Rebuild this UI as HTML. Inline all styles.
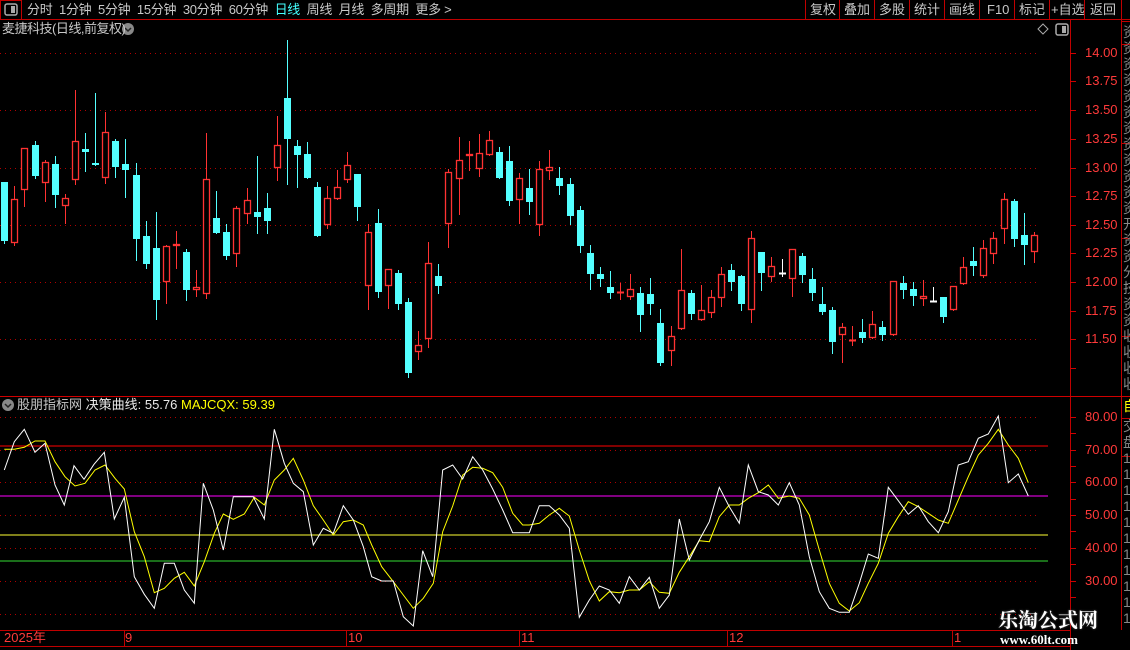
<!DOCTYPE html>
<html><head><meta charset="utf-8">
<style>
html,body{margin:0;padding:0;background:#000;}
body{width:1130px;height:650px;overflow:hidden;position:relative;font-family:"Liberation Sans","Noto Sans CJK SC",sans-serif;}
.t{position:absolute;white-space:nowrap;font-size:13px;color:#c8c8c8;line-height:16px;}
.ax{position:absolute;font-size:13px;color:#ff3a3a;left:1085px;line-height:14px;}
</style></head><body>
<svg id="s" width="1130" height="650" style="position:absolute;left:0;top:0">
<g stroke="#c00000" stroke-width="1" fill="none">
<line x1="0" y1="19.5" x2="1130" y2="19.5"/>
<rect x="0.5" y="0.5" width="21" height="19"/>
<line x1="805.5" y1="0" x2="805.5" y2="19"/><line x1="839.5" y1="0" x2="839.5" y2="19"/>
<line x1="874.5" y1="0" x2="874.5" y2="19"/><line x1="909.5" y1="0" x2="909.5" y2="19"/>
<line x1="944.5" y1="0" x2="944.5" y2="19"/><line x1="979.5" y1="0" x2="979.5" y2="19"/>
<line x1="1014.5" y1="0" x2="1014.5" y2="19"/><line x1="1049.5" y1="0" x2="1049.5" y2="19"/>
<line x1="1084.5" y1="0" x2="1084.5" y2="19"/><line x1="1121.5" y1="0" x2="1121.5" y2="19"/>
<line x1="1070.5" y1="19" x2="1070.5" y2="650"/>
<line x1="1121.5" y1="19" x2="1121.5" y2="630"/>
<line x1="0" y1="396.5" x2="1130" y2="396.5" stroke="#d00000"/>
<line x1="0" y1="630.5" x2="1070" y2="630.5"/>
<line x1="0" y1="646.5" x2="1070" y2="646.5"/>
<line x1="1121" y1="21.5" x2="1130" y2="21.5"/><line x1="1121" y1="44.5" x2="1130" y2="44.5"/>
<line x1="1121" y1="143.5" x2="1130" y2="143.5"/><line x1="1121" y1="238.5" x2="1130" y2="238.5"/>
<line x1="1121" y1="336.5" x2="1130" y2="336.5"/><line x1="1121" y1="418.5" x2="1130" y2="418.5"/>
<line x1="1121" y1="456.5" x2="1130" y2="456.5"/>
<line x1="124.5" y1="630" x2="124.5" y2="646"/><line x1="346.5" y1="630" x2="346.5" y2="646"/>
<line x1="519.5" y1="630" x2="519.5" y2="646"/><line x1="727.5" y1="630" x2="727.5" y2="646"/>
<line x1="952.5" y1="630" x2="952.5" y2="646"/>
</g>
<rect x="5" y="4" width="12" height="11" rx="2" fill="none" stroke="#aaa" stroke-width="1.5"/>
<rect x="11" y="6" width="4" height="7" fill="#aaa"/>
<rect x="1056" y="24" width="12" height="11" rx="2" fill="none" stroke="#aaa" stroke-width="1.5"/>
<rect x="1062" y="26" width="4" height="7" fill="#aaa"/>
<path d="M1043 24 L1048 29 L1043 34 L1038 29 Z" fill="none" stroke="#aaa"/>
<circle cx="128" cy="29" r="6" fill="#888"/><path d="M125 28 L128 31 L131 28" stroke="#222" stroke-width="1.5" fill="none"/>
<circle cx="8" cy="405" r="6" fill="#888"/><path d="M5 404 L8 407 L11 404" stroke="#222" stroke-width="1.5" fill="none"/>
<g id="grid" stroke="#b00000" stroke-dasharray="1 4"></g>
<g id="ticks" stroke="#d00000"></g>
<line x1="0" y1="446" x2="1048" y2="446" stroke="#ff0000"/>
<line x1="0" y1="496" x2="1048" y2="496" stroke="#ff00ff"/>
<line x1="0" y1="535" x2="1048" y2="535" stroke="#ffff33"/>
<line x1="0" y1="561" x2="1048" y2="561" stroke="#33dd33"/>
<g id="c"></g>
<polyline id="yl" fill="none" stroke="#ffff00" stroke-width="1"/>
<polyline id="wl" fill="none" stroke="#ffffff" stroke-width="1"/>
</svg>
<div class="t" style="left:27px;top:2px;letter-spacing:-0.3px">分时&nbsp; 1分钟&nbsp; 5分钟&nbsp; 15分钟&nbsp; 30分钟&nbsp; 60分钟 <span style="color:#44ffff">&nbsp;日线</span>&nbsp; 周线&nbsp; 月线&nbsp; 多周期&nbsp; 更多 &gt;</div>
<div class="t" style="left:810px;top:2px">复权</div><div class="t" style="left:844px;top:2px">叠加</div>
<div class="t" style="left:879px;top:2px">多股</div><div class="t" style="left:914px;top:2px">统计</div>
<div class="t" style="left:949px;top:2px">画线</div><div class="t" style="left:987px;top:2px">F10</div>
<div class="t" style="left:1019px;top:2px">标记</div><div class="t" style="left:1051px;top:2px">+自选</div>
<div class="t" style="left:1090px;top:2px">返回</div>
<div class="t" style="left:2px;top:21px;letter-spacing:-0.5px">麦捷科技(日线,前复权)</div>
<div class="t" style="left:17px;top:397px">股朋指标网 <span style="color:#e8e8e8">决策曲线: 55.76</span> <span style="color:#ffff00">MAJCQX: 59.39</span></div>
<div class="ax" style="top:46px">14.00</div><div class="ax" style="top:74px">13.75</div>
<div class="ax" style="top:103px">13.50</div><div class="ax" style="top:132px">13.25</div>
<div class="ax" style="top:161px">13.00</div><div class="ax" style="top:189px">12.75</div>
<div class="ax" style="top:218px">12.50</div><div class="ax" style="top:246px">12.25</div>
<div class="ax" style="top:275px">12.00</div><div class="ax" style="top:304px">11.75</div>
<div class="ax" style="top:332px">11.50</div>
<div class="ax" style="top:410px">80.00</div><div class="ax" style="top:443px">70.00</div>
<div class="ax" style="top:475px">60.00</div><div class="ax" style="top:508px">50.00</div>
<div class="ax" style="top:541px">40.00</div><div class="ax" style="top:574px">30.00</div>
<div style="position:absolute;left:1122px;top:24px;width:8px;height:370px;overflow:hidden"><div class="t" style="left:1px;top:0;color:#888;font-size:14px;line-height:16px">资<br>资<br>资<br>资<br>资<br>资<br>资<br>资<br>资<br>资<br>资<br>资<br>开<br>资<br>资<br>分<br>技<br>资<br>资<br>收<br>收<br>收<br>收</div></div>
<div style="position:absolute;left:1122px;top:398px;width:8px;height:232px;overflow:hidden"><div class="t" style="left:1px;top:0;color:#ffff00;font-size:14px">自</div><div class="t" style="left:1px;top:20px;color:#888;font-size:14px;line-height:16px">交<br>盘<br>1<br>1<br>1<br>1<br>1<br>1<br>1<br>1<br>1<br>1<br>1</div></div>
<div class="t" style="left:4px;top:630px;color:#ff3a3a">2025年</div>
<div class="t" style="left:125px;top:630px;color:#ff3a3a">9</div>
<div class="t" style="left:348px;top:630px;color:#ff3a3a">10</div>
<div class="t" style="left:521px;top:630px;color:#ff3a3a">11</div>
<div class="t" style="left:729px;top:630px;color:#ff3a3a">12</div>
<div class="t" style="left:954px;top:630px;color:#ff3a3a">1</div>
<div class="t" style="left:998px;top:606px;color:#fff;font-size:20px;font-weight:bold;line-height:26px;font-family:'Noto Serif CJK SC','Noto Sans CJK SC',serif;text-shadow:0 0 2px #555">乐淘公式网</div>
<div class="t" style="left:1000px;top:632px;color:#fff;font-size:13px;font-weight:bold;font-family:'Liberation Serif',serif">www.60lt.com</div>
<script>
var NS="http://www.w3.org/2000/svg";
function el(p,t,a){var e=document.createElementNS(NS,t);for(var k in a)e.setAttribute(k,a[k]);p.appendChild(e);return e;}
var g=document.getElementById('grid');
[53,110,168,225,282,339,417,450,482,515,548,581,614].forEach(function(y){el(g,'line',{x1:0,y1:y+.5,x2:1040,y2:y+.5});});
var tk=document.getElementById('ticks');
[53,81,110,139,168,196,225,253,282,311,339,368,417,433,450,466,482,499,515,531,548,564,581,597].forEach(function(y){el(tk,'line',{x1:1070,y1:y+.5,x2:1076,y2:y+.5});});
var C=[[4,'c',182,241,182,243],[14,'r',199,243,186,245],[24,'r',148,190,148,206],[35,'c',145,176,141,178],[45,'r',162,183,160,201],[55,'c',164,195,156,207],[65,'r',198,206,194,223],[75,'r',141,180,90,184],[85,'c',149,152,133,171],[95,'c',163,165,93,165],[105,'r',132,178,112,183],[115,'c',141,167,139,177],[125,'c',164,170,139,197],[136,'c',175,239,163,260],[146,'c',236,264,221,268],[156,'c',248,300,212,319],[166,'r',246,282,245,303],[176,'r',244,246,231,268],[186,'c',252,290,249,300],[196,'r',287,290,270,296],[206,'r',179,294,133,298],[216,'c',218,233,191,233],[226,'c',232,256,224,259],[236,'r',208,254,206,266],[247,'r',200,214,188,223],[257,'c',212,217,156,233],[267,'c',208,221,193,233],[277,'r',145,168,116,180],[287,'c',98,139,40,184],[297,'c',146,155,140,187],[307,'c',154,178,142,178],[317,'c',187,236,182,236],[327,'r',198,225,186,228],[337,'r',187,199,170,199],[347,'r',165,180,152,182],[357,'c',174,207,174,220],[368,'r',232,286,224,309],[378,'c',223,292,209,297],[388,'r',269,286,269,308],[398,'c',273,304,270,309],[408,'c',302,373,298,377],[418,'r',345,352,331,359],[428,'r',263,339,242,347],[438,'c',276,286,264,293],[448,'r',172,224,169,247],[459,'r',160,179,137,214],[469,'r',154,156,141,170],[479,'r',153,169,134,176],[489,'r',140,155,131,155],[499,'c',152,178,147,178],[509,'c',161,201,146,205],[519,'r',178,200,173,223],[529,'c',188,202,169,214],[539,'r',169,225,161,235],[549,'r',167,171,150,179],[559,'c',178,186,167,194],[570,'c',184,216,178,224],[580,'c',210,246,206,252],[590,'c',253,274,245,289],[600,'c',274,279,267,286],[610,'c',287,293,271,298],[620,'r',292,293,283,299],[630,'r',289,297,274,299],[640,'c',293,315,287,331],[650,'c',294,304,278,314],[660,'c',323,363,309,365],[671,'r',336,351,326,365],[681,'r',290,329,249,329],[691,'c',293,314,290,319],[701,'r',310,320,285,320],[711,'r',297,313,290,317],[721,'r',274,298,267,306],[731,'c',270,282,264,290],[741,'c',276,304,275,310],[751,'r',238,310,231,322],[761,'c',252,273,252,290],[771,'r',266,277,257,281],[782,'w',273,273,259,276],[792,'r',249,279,249,296],[802,'c',256,275,253,282],[812,'c',279,293,268,300],[822,'c',304,312,287,314],[832,'c',310,342,307,353],[842,'r',327,335,323,362],[852,'r',340,340,326,345],[862,'c',332,338,319,342],[872,'r',324,338,311,338],[882,'c',327,335,321,340],[893,'r',281,335,281,335],[903,'c',283,290,276,298],[913,'c',289,296,282,305],[923,'r',296,299,280,305],[933,'w',301,301,287,301],[943,'c',297,317,297,322],[953,'r',286,310,286,310],[963,'r',267,284,257,284],[973,'c',261,266,247,275],[983,'r',248,276,240,277],[993,'r',238,254,232,263],[1004,'r',199,229,193,243],[1014,'c',201,239,199,246],[1024,'c',235,245,213,264],[1034,'r',235,252,232,262]];
var cg=document.getElementById('c');
C.forEach(function(k){var x=k[0],col=k[1]=='c'?'#54ffff':k[1]=='r'?'#ff3232':'#ffffff';
el(cg,'line',{x1:x+.5,y1:k[4],x2:x+.5,y2:k[5]+1,stroke:col});
var h=k[3]-k[2];
if(k[1]=='c')el(cg,'rect',{x:x-3,y:k[2],width:7,height:Math.max(h,2),fill:col});
else if(h<2)el(cg,'line',{x1:x-3,y1:k[2]+.5,x2:x+4,y2:k[2]+.5,stroke:col,'stroke-width':2});
else el(cg,'rect',{x:x-2.5,y:k[2]+.5,width:6,height:h-1,fill:'#000',stroke:col,'stroke-width':1.3});});
var W1=[[13,180],[43,95],[73,58],[105,127],[135,100],[165,225],[193,285],[222,167],[252,208],[282,163],[313,127],[343,327],[373,262],[403,500],[433,553],[463,595],[493,460],[523,460],[553,540],[583,580],[610,220],[640,300],[670,420],[700,260],[730,260],[760,260],[793,327],[823,58],[853,160],[880,220],[910,245],[940,405],[970,355],[1000,370],[1030,287],[1060,330],[1090,410],[1115,500],[1145,513],[1180,513],[1210,620],[1240,648],[1268,422],[1298,500],[1328,180],[1358,165],[1388,207],[1418,140],[1448,180],[1478,237],[1508,300],[1538,368],[1568,368]];
var W2=[[28,368],[58,287],[88,287],[118,315],[148,355],[178,622],[208,570],[238,528],[268,540],[298,580],[328,500],[358,540],[388,502],[418,595],[448,555],[478,327],[508,450],[538,390],[568,335],[598,232],[628,290],[658,340],[685,165],[715,245],[745,255],[775,285],[808,218],[838,285],[868,440],[898,545],[928,595],[958,607],[988,607],[1018,520],[1045,432],[1075,445],[1105,232],[1135,272],[1165,313],[1195,287],[1225,335],[1255,368],[1285,305],[1315,165],[1345,155],[1375,85],[1405,72],[1435,18],[1465,218],[1495,192],[1525,258]];
var Y1=[[13,118],[43,118],[73,112],[105,93],[135,93],[165,155],[195,200],[225,228],[255,220],[285,180],[315,165],[345,205],[373,237],[403,365],[433,440],[463,548],[493,535],[523,505],[553,487],[583,528],[613,455],[643,370],[670,312],[700,328],[733,312],[763,262],[793,285],[823,210],[853,180],[880,145],[910,210],[940,287],[970,330],[1000,375],[1030,335],[1060,330],[1090,345],[1115,405],[1145,470],[1180,515],[1210,555],[1240,595],[1270,565],[1300,520],[1328,365],[1358,288],[1388,195],[1418,172],[1448,175],[1478,188],[1508,232],[1538,310],[1568,345]];
var Y2=[[28,345],[58,340],[88,315],[118,295],[148,318],[178,420],[208,512],[238,573],[268,545],[298,548],[328,540],[358,540],[388,515],[418,547],[448,550],[478,487],[508,440],[538,392],[568,395],[598,320],[628,285],[658,285],[685,265],[715,248],[745,225],[775,265],[808,258],[838,265],[868,315],[898,420],[928,520],[958,580],[988,603],[1018,578],[1045,520],[1075,460],[1105,370],[1135,320],[1165,275],[1195,290],[1225,310],[1255,330],[1285,340],[1315,270],[1345,200],[1375,135],[1405,100],[1435,58],[1465,105],[1495,145],[1525,218]];
function pts(a,b){return a.map(function(p){return (p[0]/3).toFixed(1)+','+(410+p[1]/3).toFixed(1);}).concat(b.map(function(p){return (520+p[0]/3).toFixed(1)+','+(410+p[1]/3).toFixed(1);})).join(' ');}
document.getElementById('wl').setAttribute('points',pts(W1,W2));
document.getElementById('yl').setAttribute('points',pts(Y1,Y2));
</script>
</body></html>
